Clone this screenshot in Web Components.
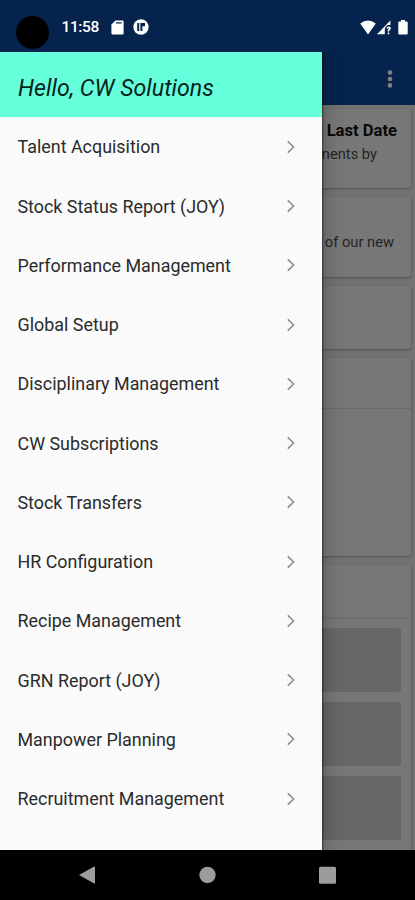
<!DOCTYPE html>
<html lang="en">
<head>
<meta charset="utf-8">
<title>CW Solutions</title>
<style>
body{margin:0;width:415px;height:900px;overflow:hidden;background:#000;font-family:Roboto,"Liberation Sans",sans-serif}
</style>
</head>
<body>
<phone-screen></phone-screen>
<script>
const define = (name, html) => customElements.define(name, class extends HTMLElement {
  constructor() {
    super();
    const t = document.createElement('template');
    t.innerHTML = html;
    this.attachShadow({mode: 'open'}).append(t.content.cloneNode(true));
  }
});

define('status-bar', `
<style>
:host{display:flex;align-items:center;height:52px;box-sizing:border-box;padding:2px 7px 0 16px;background:#05234d;color:#fff}
.cam{width:33px;height:33px;border-radius:50%;background:#000;margin-top:10px}
.time{font-size:15.5px;font-weight:500;letter-spacing:-.4px;margin-left:12.5px;width:49.5px;line-height:20px}
svg{display:block;fill:#fff}
.p{margin-left:9px}.wifi{margin-left:auto}.sig{margin-left:1px}.bat{margin-left:7px}
</style>
<div class="cam"></div><span class="time">11:58</span>
<svg class="sd" width="13" height="15" viewBox="0 0 13 15"><path fill-rule="evenodd" d="M4.5 .5H11.5Q12.6 .5 12.6 1.6V13.3Q12.6 14.5 11.4 14.5H1.6Q.4 14.5 .4 13.3V4.6ZM5 2.2V3.5H10.6V2.2Z"/></svg>
<svg class="p" width="16" height="16" viewBox="0 0 16 16"><circle cx="8" cy="8" r="7.7"/><path d="M4.2 4H6.2V12H4.2ZM7.4 4H12V7.2H9.4V12H7.4Z" fill="#05234d"/></svg>
<svg class="wifi" width="16" height="15" viewBox="0 0 16 15"><path d="M8 14.5L.2 3.6Q8-2.8 15.8 3.6Z"/></svg>
<svg class="sig" width="14" height="15" viewBox="0 0 14 15"><path d="M13.4 .5V5H10.6Q7.8 6.5 7.8 9.5V14.3H0Z"/><path d="M10 8.4Q11.5 6.4 13 7.8Q13.6 9 11.5 10.3V11.4M11.5 12.5V14.2" fill="none" stroke="#fff" stroke-width="1.6"/></svg>
<svg class="bat" width="10" height="15" viewBox="0 0 10 15"><path d="M3 0H7V1.4H8.7Q9.7 1.4 9.7 2.4V13.5Q9.7 14.5 8.7 14.5H1.3Q.3 14.5 .3 13.5V2.4Q.3 1.4 1.3 1.4H3Z"/></svg>
`);

define('app-bar', `
<style>
:host{display:flex;align-items:center;justify-content:flex-end;height:53px;padding-right:22px;background:#05234d}
svg{display:block;fill:#7f8185;margin-top:1px}
</style>
<svg width="6" height="18" viewBox="0 0 6 18"><circle cx="3" cy="2.6" r="2.3"/><circle cx="3" cy="9" r="2.3"/><circle cx="3" cy="15.4" r="2.3"/></svg>
`);

define('info-card', `
<style>
:host{display:block;box-sizing:border-box;margin:0 4px;border-radius:3px;background:#777;box-shadow:0 1px 2px 0 #505050,1px 0 1px #686868;color:#111;text-align:right}
</style><slot></slot>
`);

define('feed-view', `
<style>
:host{display:flex;flex-direction:column;gap:9px;height:745px;box-sizing:border-box;padding-top:4px;overflow:hidden;background:#727272}
info-card{flex:none}
.a{height:79px;padding:10px 14px 0}
.b{height:80px;padding:34px 17px 0}
.c{height:63px}.d{height:198px}.e{height:300px}
b{display:block;font-size:16.6px;font-weight:700;line-height:24px;color:#080808}
span{display:block;font-size:14.7px;line-height:22px;color:#242424}
.a span{padding-right:20px}
.rule{height:50px;border-bottom:1px solid #686868}
.e .rule{height:52px;border-bottom:2px solid #707070}
.tiles{display:grid;grid-auto-rows:64px;gap:10px;padding:9px 10px 0 0}
.tiles i{display:block;background:#676767;border-radius:2px}
</style>
<info-card class="a"><b>Last Date</b><span>nents by</span></info-card>
<info-card class="b"><span>of our new</span></info-card>
<info-card class="c"></info-card>
<info-card class="d"><div class="rule"></div></info-card>
<info-card class="e"><div class="rule"></div><div class="tiles"><i></i><i></i><i></i></div></info-card>
`);

define('menu-item', `
<style>
:host{display:flex;align-items:center;justify-content:space-between;height:59.25px;padding:0 26px 0 17.5px;font-size:17.9px;color:#2b2b2b}
svg{display:block;fill:none;stroke:#8a8a8a;stroke-width:1.5}
</style>
<span><slot></slot></span>
<svg width="10" height="14" viewBox="0 0 10 14"><path d="M1.8 1.4L7.6 7L1.8 12.6"/></svg>
`);

define('nav-drawer', `
<style>
:host{display:block;width:322px;background:#fafafa;box-shadow:0 0 2px 1px rgba(0,0,0,.5),2px 0 18px rgba(0,0,0,.25);overflow:hidden}
header{height:65px;margin-bottom:.2px;box-sizing:border-box;padding:6px 0 0 18px;display:flex;align-items:center;background:#66ffdc;color:#06241d;font-size:23.2px;font-style:italic}
</style>
<header><slot name="title"></slot></header><slot></slot>
`);

define('system-nav', `
<style>
:host{display:flex;justify-content:space-between;height:50px;box-sizing:border-box;padding:16px 79px 0;background:#000}
svg{display:block;fill:#9c9c9c}
</style>
<svg width="17" height="18" viewBox="0 0 17 18"><path d="M0 9L15.2 .6Q16 .3 16 1.2V16.8Q16 17.7 15.2 17.4Z"/></svg>
<svg width="17" height="18" viewBox="0 0 17 18"><circle cx="8.5" cy="9" r="8.2"/></svg>
<svg width="17" height="18" viewBox="0 0 17 18"><rect y=".7" width="17" height="17" rx="1.5"/></svg>
`);

const items = ['Talent Acquisition','Stock Status Report (JOY)','Performance Management','Global Setup','Disciplinary Management','CW Subscriptions','Stock Transfers','HR Configuration','Recipe Management','GRN Report (JOY)','Manpower Planning','Recruitment Management'];
define('phone-screen', `
<style>
:host{display:block;position:relative;width:415px;height:900px;overflow:hidden}
.overlay{position:absolute;left:0;top:52px;width:415px;height:798px;overflow:hidden}
nav-drawer{height:798px}
</style>
<status-bar></status-bar><app-bar></app-bar><feed-view></feed-view><system-nav></system-nav>
<div class="overlay"><nav-drawer><span slot="title">Hello, CW Solutions</span>${items.map(t => `<menu-item>${t}</menu-item>`).join('')}</nav-drawer></div>
`);
</script>
</body>
</html>
